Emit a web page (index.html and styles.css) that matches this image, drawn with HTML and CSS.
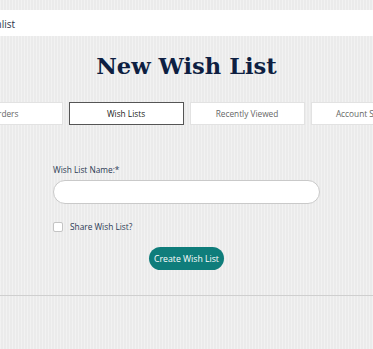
FILE: index.html
```html
<!DOCTYPE html>
<html lang="en">
<head>
<meta charset="utf-8">
<title>New Wish List</title>
<link rel="stylesheet" href="styles.css">
</head>
<body>
<div class="topbar"></div>
<div class="crumbs"><span class="crumb-text">Wishlist</span></div>
<main class="page">
  <h1 class="title">New Wish List</h1>
  <nav class="tabs">
    <a class="tab">Orders</a>
    <a class="tab active">Wish Lists</a>
    <a class="tab">Recently Viewed</a>
    <a class="tab">Account Settings</a>
  </nav>
  <section class="panel">
    <form class="form">
      <label class="label" for="name">Wish List Name:<span class="req">*</span></label>
      <input class="input" id="name" type="text">
      <label class="check"><span class="box"></span><span>Share Wish List?</span></label>
      <div class="actions"><button type="button" class="btn">Create Wish List</button></div>
    </form>
  </section>
</main>
</body>
</html>
```
FILE: styles.css
```css
html, body {
  margin: 0;
  padding: 0;
}
body {
  background-color: #ebebeb;
  background-image: repeating-linear-gradient(90deg, rgba(255,255,255,0.35) 0 1px, rgba(0,0,0,0) 1px 3px);
  font-family: "Open Sans", "Liberation Sans", sans-serif;
  color: #2b3a55;
  overflow: hidden;
  width: 373px;
  height: 349px;
}
.topbar {
  height: 10px;
}
.crumbs {
  height: 26px;
  background: #fff;
  display: flex;
  align-items: center;
  overflow: hidden;
}
.crumb-text {
  font-size: 10px;
  color: #2b3448;
  margin-left: -21px;
  margin-top: 1px;
}
.page {
  display: flex;
  flex-direction: column;
  align-items: center;
}
.title {
  margin: 12px 0 0;
  font-family: "DejaVu Serif", "Liberation Serif", serif;
  font-weight: bold;
  font-size: 22.6px;
  line-height: 36px;
  color: #0e1f42;
}
.tabs {
  display: flex;
  gap: 6px;
  margin-top: 18px;
  width: 478px;
  flex-shrink: 0;
}
.tab {
  width: 115px;
  height: 23px;
  box-sizing: border-box;
  flex-shrink: 0;
  background: #fff;
  border: 1px solid #e2e2e2;
  display: flex;
  align-items: center;
  justify-content: center;
  font-size: 8.3px;
  color: #666;
  white-space: nowrap;
  overflow: hidden;
}
.tab.active {
  border-color: #555;
  color: #222;
}
.panel {
  align-self: stretch;
  height: 170px;
  border-bottom: 1px solid #cfcfcf;
  display: flex;
  justify-content: center;
}
.form {
  width: 267px;
  display: flex;
  flex-direction: column;
  padding-top: 39px;
}
.label {
  font-size: 8.3px;
  line-height: 12px;
  color: #2b3a55;
}
.req {
  color: #2b3a55;
}
.input {
  margin-top: 4px;
  height: 24px;
  box-sizing: border-box;
  border: 1px solid #c9c9c9;
  border-radius: 12px;
  background: #fff;
  padding: 0 12px;
  outline: none;
}
.check {
  margin-top: 17px;
  display: flex;
  align-items: center;
  gap: 7px;
  font-size: 8.3px;
  color: #2b3a55;
  line-height: 12px;
}
.box {
  width: 8px;
  height: 8px;
  border: 1px solid #c4c4c4;
  border-radius: 2px;
  background: #fff;
}
.actions {
  display: flex;
  justify-content: center;
  margin-top: 14px;
}
.btn {
  height: 23px;
  width: 75px;
  padding: 0;
  border: none;
  border-radius: 12px;
  background: #0f7d7b;
  color: #fff;
  font-family: "Open Sans", "Liberation Sans", sans-serif;
  font-size: 8.7px;
  font-weight: 500;
  white-space: nowrap;
}
```
